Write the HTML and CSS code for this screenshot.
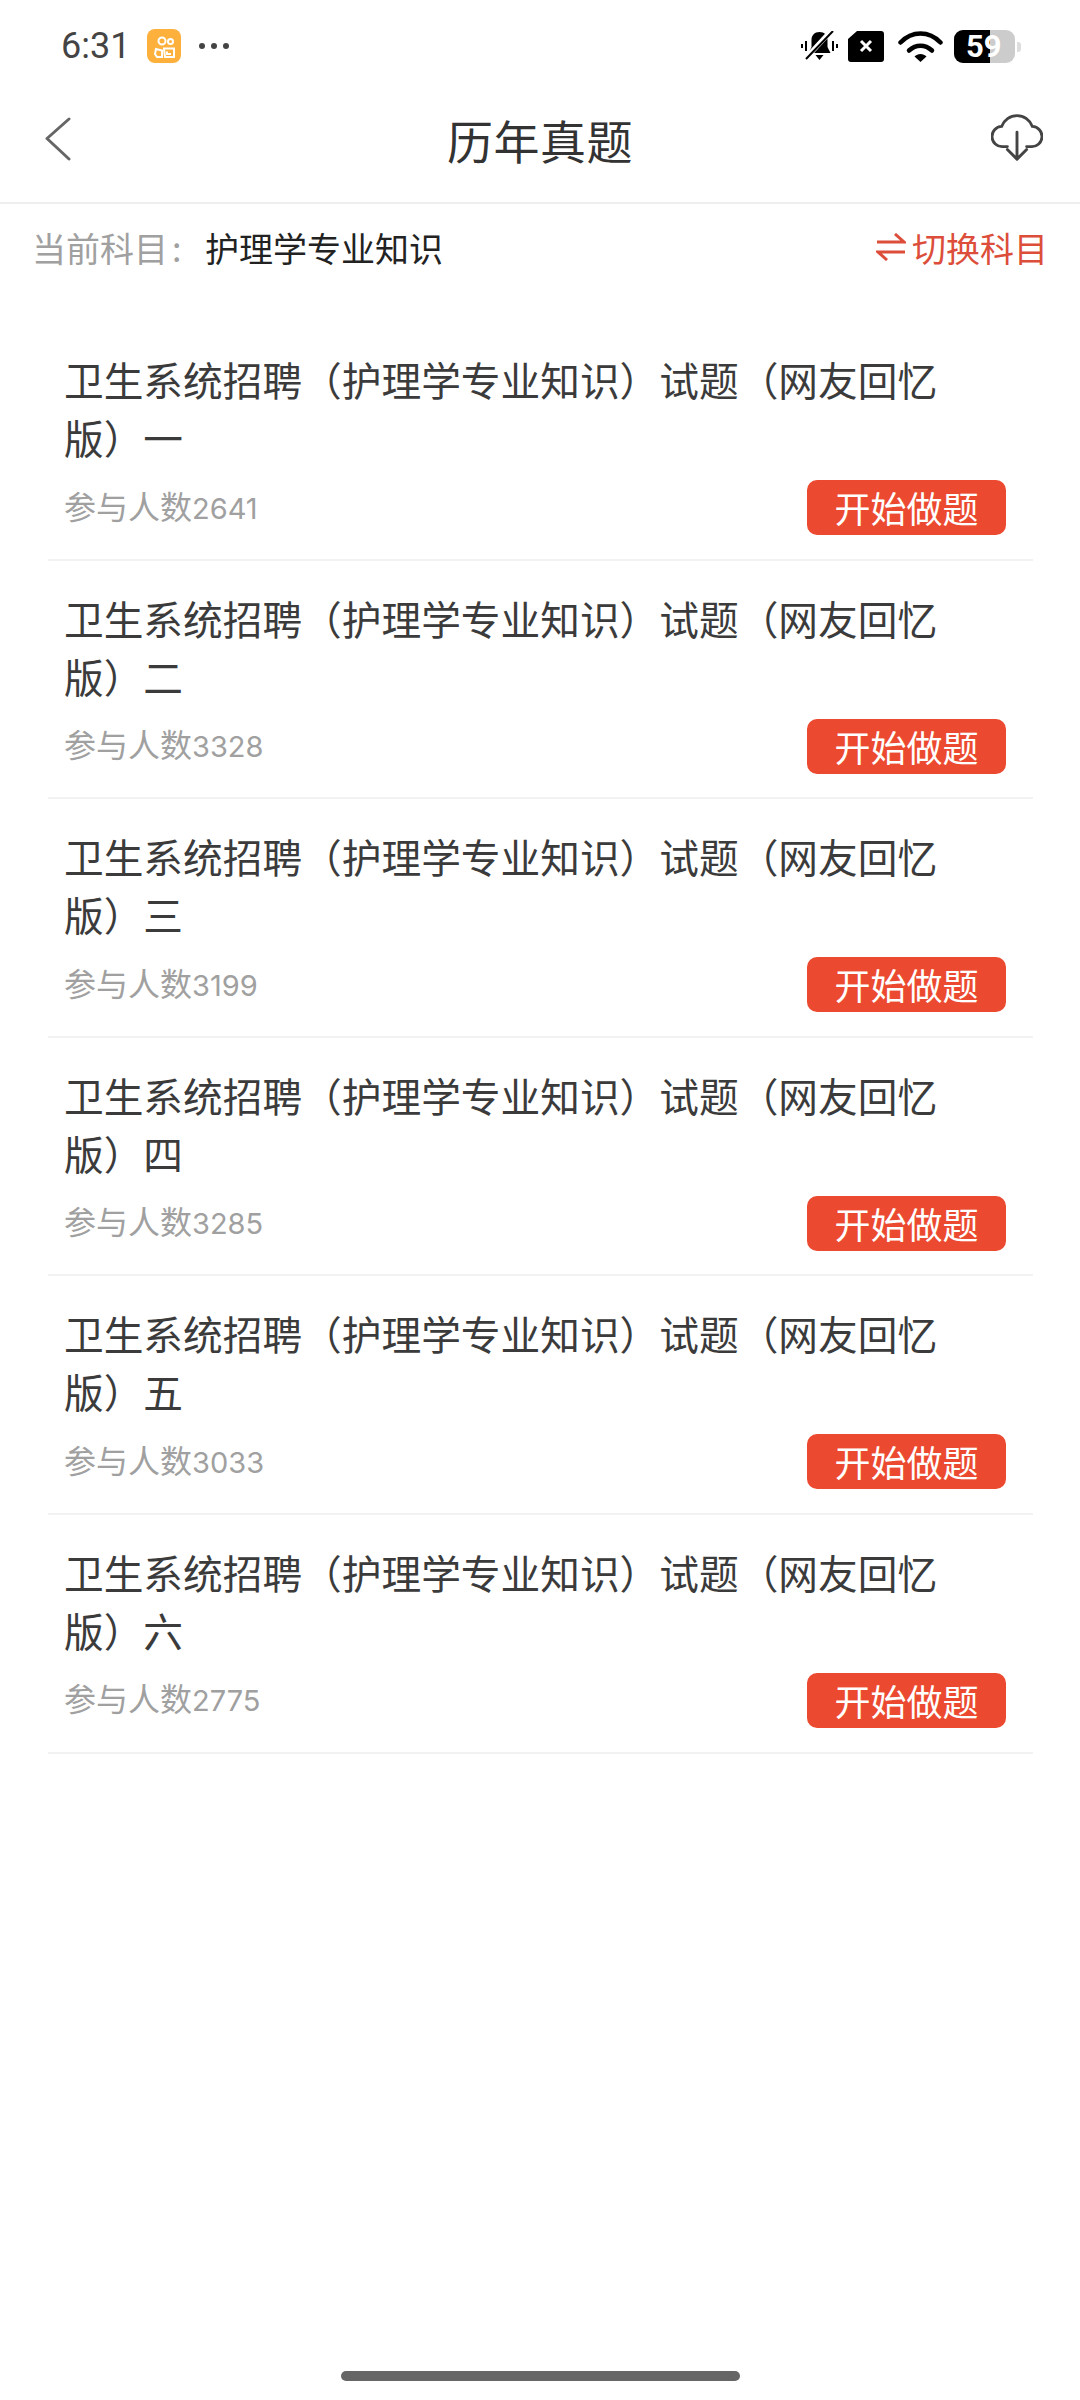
FILE: index.html
```html
<!DOCTYPE html>
<html>
<head>
    <meta charset="utf-8">
    <title>历年真题</title>
    <link rel="stylesheet" href="styles.css">
</head>
<body>
    <div class="status">
        <span class="time">6:31</span>
        <svg class="app-icon" width="34" height="34" viewBox="0 0 34 34">
            <rect width="34" height="34" rx="8" fill="#fdb03c"/>
            <g fill="none" stroke="#fff" stroke-width="2">
                <circle cx="15" cy="12" r="3.500"/>
                <circle cx="23.500" cy="12.500" r="2.500"/>
                <path d="M9 20l6 1.500v6.500h-5l-2-3z"/>
            </g>
            <path d="M17 19.500h10v8.500h-9zM20 22.500v2.500h4" fill="none" stroke="#fff" stroke-width="2"/>
        </svg>
        <span class="dots"><i></i><i></i><i></i></span>
        <span class="status-right">
            <svg width="37" height="30" viewBox="0 0 37 30">
                <path d="M18.500 1c-5 0-8 3.500-8 8v7l-3 6h22l-3-6V9c0-4.500-3-8-8-8zM14.500 24h8l-4 5z" fill="#000"/>
                <path d="M5 27L30 0" stroke="#fff" stroke-width="5"/>
                <path d="M5 28L32 0" stroke="#000" stroke-width="2"/>
                <path d="M1 13v4M5 10v10M32 10v10M36 13v4" stroke="#000" stroke-width="2"/>
            </svg>
            <svg width="36" height="31" viewBox="0 0 36 31">
                <path d="M9 0h24a3 3 0 0 1 3 3v25a3 3 0 0 1-3 3H3a3 3 0 0 1-3-3V8z" fill="#000"/>
                <path d="M13 10l10 10M23 10l-10 10" stroke="#fff" stroke-width="3"/>
            </svg>
            <svg class="wifi" width="45" height="32" viewBox="0 0 45 32">
                <g fill="none" stroke="#000" stroke-width="4.500" stroke-linecap="round">
                    <path d="M2.500 12.500C14 0.500 31 0.500 42.500 12.500"/>
                    <path d="M11 20.500c7-6.500 16-6.500 23 0"/>
                </g>
                <path d="M22.500 32l-6-5.500c3-3.500 9-3.500 12 0z" fill="#000"/>
            </svg>
            <span class="battery"><span class="battery-level">59</span></span>
        </span>
    </div>

    <div class="header">
        <svg class="back" width="26" height="44" viewBox="0 0 26 44">
            <path d="M24 2L2 21.500 24 42" fill="none" stroke="#666" stroke-width="3" stroke-linecap="round" stroke-linejoin="round"/>
        </svg>
        <h1>历年真题</h1>
        <svg class="cloud" width="52" height="50" viewBox="0 0 54 52">
            <path d="M17 36h-5a10.500 10.500 0 0 1-1-21A17 17 0 0 1 43 15a10.500 10.500 0 0 1-1 21h-5" fill="none" stroke="#444" stroke-width="3" stroke-linecap="round"/>
            <path d="M27 21v28M17 39l10 10 10-10" fill="none" stroke="#444" stroke-width="3" stroke-linecap="round" stroke-linejoin="round"/>
        </svg>
    </div>

    <div class="subject">
        <span class="subject-label">当前科目<span class="colon">:</span></span>
        <span class="subject-name">护理学专业知识</span>
        <span class="switch">
            <svg width="30" height="28" viewBox="0 0 30 28">
                <path d="M1 9h27L19 1M29 19H2l9 8" fill="none" stroke="#dc4d3a" stroke-width="3"/>
            </svg>
            切换科目
        </span>
    </div>

    <ul class="list">
        <li class="item">
            <div class="item-title">卫生系统招聘（护理学专业知识）试题（网友回忆版）一</div>
            <div class="item-foot"><span class="count">参与人数<span class="num">2641</span></span><a class="start">开始做题</a></div>
        </li>
        <li class="item">
            <div class="item-title">卫生系统招聘（护理学专业知识）试题（网友回忆版）二</div>
            <div class="item-foot"><span class="count">参与人数<span class="num">3328</span></span><a class="start">开始做题</a></div>
        </li>
        <li class="item">
            <div class="item-title">卫生系统招聘（护理学专业知识）试题（网友回忆版）三</div>
            <div class="item-foot"><span class="count">参与人数<span class="num">3199</span></span><a class="start">开始做题</a></div>
        </li>
        <li class="item">
            <div class="item-title">卫生系统招聘（护理学专业知识）试题（网友回忆版）四</div>
            <div class="item-foot"><span class="count">参与人数<span class="num">3285</span></span><a class="start">开始做题</a></div>
        </li>
        <li class="item">
            <div class="item-title">卫生系统招聘（护理学专业知识）试题（网友回忆版）五</div>
            <div class="item-foot"><span class="count">参与人数<span class="num">3033</span></span><a class="start">开始做题</a></div>
        </li>
        <li class="item">
            <div class="item-title">卫生系统招聘（护理学专业知识）试题（网友回忆版）六</div>
            <div class="item-foot"><span class="count">参与人数<span class="num">2775</span></span><a class="start">开始做题</a></div>
        </li>
    </ul>

    <div class="home-bar"></div>
</body>
</html>
```

FILE: styles.css
```css
*{
    margin: 0;
    padding: 0;
    box-sizing: border-box;
}
ul{
    list-style: none;
}
body{
    width: 1080px;
    height: 2400px;
    background: #fff;
    font-family: "Noto Sans CJK SC", "Noto Sans", sans-serif;
    color: #333;
    display: flex;
    flex-direction: column;
    overflow: hidden;
}
.status{
    height: 92px;
    display: flex;
    align-items: center;
    padding: 0 65px 0 61px;
}
.time{
    font-family: Roboto, sans-serif;
    font-size: 36px;
    color: #444;
    width: 86px;
}
.dots{
    display: flex;
    gap: 6px;
    margin-left: 18px;
}
.dots i{
    width: 6px;
    height: 6px;
    border-radius: 50%;
    background: #444;
}
.status-right{
    margin-left: auto;
    display: flex;
    align-items: center;
    gap: 10px;
}
.wifi{
    margin-left: 4px;
}
.battery{
    width: 61px;
    height: 33px;
    border-radius: 9px;
    background: #ccc;
    position: relative;
    display: block;
    margin-left: 1px;
}
.battery:after{
    content: "";
    position: absolute;
    right: -6px;
    top: 12px;
    width: 4px;
    height: 10px;
    border-radius: 0 3px 3px 0;
    background: #ddd;
}
.battery-level{
    display: block;
    width: 36px;
    height: 33px;
    border-radius: 9px 0 0 9px;
    background: #000;
    color: #fff;
    font-family: Roboto, sans-serif;
    font-weight: 700;
    font-size: 31px;
    line-height: 33px;
    padding-left: 12px;
    white-space: nowrap;
}
.header{
    height: 112px;
    display: grid;
    grid-template-columns: 1fr auto 1fr;
    align-items: center;
    padding: 0 37px 16px;
    border-bottom: 2px solid #eee;
}
.back{
    margin-left: 8px;
}
.cloud{
    justify-self: end;
    margin-bottom: 4px;
}
.header h1{
    font-size: 46px;
    font-weight: 400;
    color: #333;
    letter-spacing: 0.5px;
}
.subject{
    height: 86px;
    display: flex;
    align-items: center;
    padding: 0 32px;
    font-size: 34px;
}
.subject-label{
    color: #a0a0a0;
    width: 173px;
}
.colon{
    margin-left: 4px;
}
.subject-name{
    color: #222;
}
.switch{
    margin-left: auto;
    display: flex;
    align-items: center;
    gap: 6px;
    color: #dc4d3a;
}
.list{
    margin: 0 47px 0 48px;
    padding-top: 32px;
}
.item{
    height: 238.6px;
    padding: 28px 27px 0 16px;
    border-bottom: 2px solid #f2f2f2;
}
.item-title{
    font-size: 39.7px;
    line-height: 58px;
    color: #3b3b3b;
    max-width: 900px;
}
.item-foot{
    display: flex;
    align-items: center;
    justify-content: space-between;
    margin-top: 14px;
}
.count{
    font-size: 32px;
    color: #a0a0a0;
    margin-bottom: 6px;
}
.num{
    font-family: Inter, sans-serif;
    font-size: 29px;
}
.start{
    width: 199px;
    height: 55px;
    border-radius: 10px;
    background: #ec4a30;
    color: #fff;
    font-size: 36px;
    line-height: 55px;
    text-align: center;
}
.home-bar{
    width: 399px;
    height: 10px;
    border-radius: 5px;
    background: #666;
    margin: auto auto 19px;
}
```
